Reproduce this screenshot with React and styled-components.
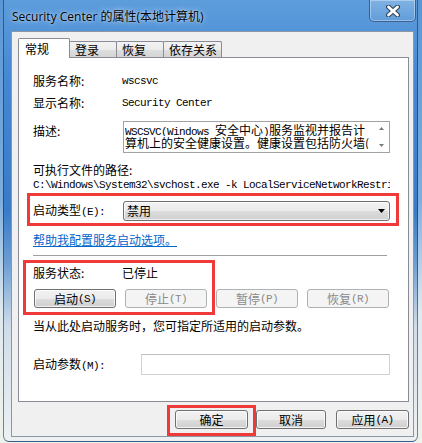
import React from "react";
import styled, { createGlobalStyle } from "styled-components";

const GlobalStyle = createGlobalStyle`
  html, body {
    margin: 0;
    padding: 0;
  }
  body {
    width: 422px;
    height: 443px;
    overflow: hidden;
    background: linear-gradient(to bottom, #5a96d4 0%, #7eaedd 45%, #dfe9ef 70%, #eef3ea 100%);
    font-family: "Noto Sans CJK SC", "Liberation Sans", sans-serif;
    font-size: 12px;
    color: #000;
  }
`;

const Stage = styled.div`
  position: relative;
  width: 422px;
  height: 443px;
`;

const Window = styled.div`
  margin-left: 3px;
  width: 415px;
  height: 442px;
  box-sizing: border-box;
  border: 1px solid rgba(20, 40, 70, 0.55);
  border-top: none;
  border-radius: 0 0 6px 6px;
  background: linear-gradient(
    to bottom,
    #5d9ddc 0%,
    #4587d2 18%,
    #3a7bc8 48%,
    #6f9fd4 60%,
    #cfdde9 74%,
    #edf1f4 100%
  );
  display: flex;
  flex-direction: column;
`;

const TitleBar = styled.div`
  height: 31px;
  flex: none;
  display: flex;
  align-items: center;
  padding-left: 8px;
`;

const Title = styled.div`
  font-family: "Open Sans", "Noto Sans CJK SC", sans-serif;
  font-size: 12px;
  color: #000;
  text-shadow: 0 0 6px rgba(255, 255, 255, 0.75), 0 0 2px rgba(255, 255, 255, 0.6);
  white-space: nowrap;
`;

const CloseButton = styled.div`
  margin-left: auto;
  margin-right: 1px;
  align-self: flex-start;
  width: 47px;
  height: 22px;
  box-sizing: border-box;
  border: 1px solid rgba(25, 45, 85, 0.6);
  border-top: none;
  border-radius: 0 0 5px 5px;
  background: linear-gradient(to bottom, rgba(255, 255, 255, 0.22), rgba(255, 255, 255, 0.06));
  box-shadow: inset 0 0 0 1px rgba(255, 255, 255, 0.35);
  display: flex;
  align-items: center;
  justify-content: center;
`;

const Client = styled.div`
  margin: 0 3px 4px 7px;
  height: 406px;
  box-sizing: border-box;
  border: 1px solid #8b97a5;
  background: #f0f0f0;
  padding: 6px 4px 7px 6px;
  display: flex;
  flex-direction: column;
`;

const TabStrip = styled.div`
  height: 19px;
  flex: none;
  display: flex;
  align-items: flex-end;
`;

const Tab = styled.div`
  position: relative;
  z-index: ${(p) => (p.$active ? 2 : 1)};
  box-sizing: border-box;
  width: ${(p) => p.$w}px;
  height: ${(p) => (p.$active ? 20 : 16)}px;
  margin-bottom: ${(p) => (p.$active ? -1 : 0)}px;
  margin-left: ${(p) => (p.$first ? 0 : -1)}px;
  border: 1px solid #898c95;
  border-bottom: none;
  border-radius: 2px 2px 0 0;
  background: ${(p) =>
    p.$active ? "#ffffff" : "linear-gradient(to bottom, #f3f3f3 0%, #ebebeb 50%, #dedede 51%, #d5d5d5 100%)"};
  padding-left: ${(p) => (p.$active ? 6 : 5)}px;
  display: flex;
  align-items: center;
  line-height: 14px;
  white-space: nowrap;
`;

const Panel = styled.div`
  position: relative;
  z-index: 1;
  height: 345px;
  flex: none;
  box-sizing: border-box;
  border: 1px solid #898c95;
  background: #ffffff;
  padding: 16px 18px 0 14px;
  display: flex;
  flex-direction: column;
`;

const Row = styled.div`
  display: flex;
  align-items: ${(p) => p.$align || "center"};
  height: ${(p) => p.$h || 14}px;
  margin-top: ${(p) => p.$mt || 0}px;
  line-height: 14px;
  white-space: nowrap;
  flex: none;
`;

const Label = styled.div`
  width: ${(p) => p.$w || 89}px;
  flex: none;
  margin-top: ${(p) => p.$mt || 0}px;
`;

/* latin text in the dialog is a 6px-wide monospace */
const Lat = styled.span`
  font-family: "Liberation Mono", monospace;
  font-size: 11px;
  letter-spacing: -0.6px;
`;

const PathText = styled.div`
  width: 357px;
  overflow: hidden;
  font-family: "Liberation Mono", monospace;
  font-size: 11px;
  letter-spacing: -0.6px;
`;

const TextArea = styled.div`
  width: 267px;
  height: 32px;
  box-sizing: border-box;
  border: 1px solid #a3a3a3;
  background: #fff;
  display: flex;
  overflow: hidden;
`;

const DescText = styled.div`
  flex: 1;
  min-width: 0;
  overflow: hidden;
  padding: 1px 0 0 1px;
  line-height: 13px;
  font-size: 12px;
`;

const DescLine = styled.div`
  height: 13px;
  white-space: nowrap;
  overflow: hidden;
`;

const ScrollBar = styled.div`
  width: 16px;
  flex: none;
  display: flex;
  flex-direction: column;
  justify-content: space-between;
  align-items: center;
  padding: 5px 0 5px;
  box-sizing: border-box;
`;

const Combo = styled.div`
  width: 267px;
  height: 20px;
  box-sizing: border-box;
  border: 1px solid #707070;
  border-radius: 3px;
  background: linear-gradient(to bottom, #f2f2f2 0%, #ebebeb 50%, #dddddd 51%, #cfcfcf 100%);
  box-shadow: inset 0 0 0 1px rgba(255, 255, 255, 0.7);
  display: flex;
  align-items: center;
  padding: 0 4px 0 3px;
`;

const ComboArrow = styled.div`
  margin-left: auto;
  display: flex;
`;

const HelpLink = styled.a`
  color: #0066cc;
  text-decoration: underline;
  cursor: pointer;
`;

const Separator = styled.div`
  height: 1px;
  flex: none;
  margin-top: ${(p) => p.$mt || 0}px;
  margin-right: 3px;
  background: #a0a0a0;
`;

const ButtonGrid = styled.div`
  display: grid;
  grid-template-columns: repeat(4, 1fr);
  column-gap: 9px;
  margin: ${(p) => p.$mt || 0}px 1px 0 1px;
  height: 19px;
  flex: none;
`;

const Button = styled.button`
  box-sizing: border-box;
  width: ${(p) => (p.$w ? `${p.$w}px` : "auto")};
  height: 19px;
  margin: 0 0 0 ${(p) => p.$ml || 0}px;
  padding: 0;
  border: 1px solid #707070;
  border-radius: 3px;
  background: linear-gradient(to bottom, #f2f2f2 0%, #ebebeb 50%, #dddddd 51%, #cfcfcf 100%);
  box-shadow: inset 0 0 0 1px rgba(255, 255, 255, 0.75);
  font-family: "Noto Sans CJK SC", sans-serif;
  font-size: 12px;
  line-height: 14px;
  color: #000;
  display: flex;
  align-items: center;
  justify-content: center;
  white-space: nowrap;

  &:disabled {
    border-color: #adb2b5;
    background: #f4f4f4;
    box-shadow: none;
    color: #8a8a8a;
  }
`;

const Input = styled.div`
  width: 249px;
  height: 21px;
  box-sizing: border-box;
  border: 1px solid #d2d2d2;
  border-top-color: #bdbdbd;
  background: #fff;
`;

const BottomBar = styled.div`
  margin-top: 8px;
  display: flex;
  justify-content: flex-end;
  flex: none;
`;

const Mark = styled.div`
  position: absolute;
  left: ${(p) => p.$x}px;
  top: ${(p) => p.$y}px;
  width: ${(p) => p.$w}px;
  height: ${(p) => p.$h}px;
  box-sizing: border-box;
  border: 3px solid #f03a3a;
  pointer-events: none;
  z-index: 10;
`;

const CloseIcon = () => (
  <svg width="14" height="12" viewBox="0 0 14 12">
    <path d="M2.5 2 L11.5 10 M11.5 2 L2.5 10" stroke="#34465c" strokeWidth="5" strokeLinecap="round" />
    <path d="M2.5 2 L11.5 10 M11.5 2 L2.5 10" stroke="#ffffff" strokeWidth="2.8" strokeLinecap="round" />
  </svg>
);

const Arrow = ({ up, color = "#000", w = 7, h = 4 }) => (
  <svg width={w} height={h} viewBox={`0 0 ${w} ${h}`}>
    <polygon points={up ? `0,${h} ${w},${h} ${w / 2},0` : `0,0 ${w},0 ${w / 2},${h}`} fill={color} />
  </svg>
);

const App = () => {
  return (
    <Stage>
      <GlobalStyle />
      <Window>
        <TitleBar>
          <Title>Security Center 的属性(本地计算机)</Title>
          <CloseButton>
            <CloseIcon />
          </CloseButton>
        </TitleBar>
        <Client>
          <TabStrip>
            <Tab $active $first $w={52}>常规</Tab>
            <Tab $w={48}>登录</Tab>
            <Tab $w={48}>恢复</Tab>
            <Tab $w={59}>依存关系</Tab>
          </TabStrip>
          <Panel>
            <Row>
              <Label>服务名称:</Label>
              <Lat>wscsvc</Lat>
            </Row>
            <Row $mt={8}>
              <Label>显示名称:</Label>
              <Lat>Security Center</Lat>
            </Row>
            <Row $mt={11} $h={32} $align="flex-start">
              <Label $w={90} $mt={3}>描述:</Label>
              <TextArea>
                <DescText>
                  <DescLine>
                    <Lat>WSCSVC(Windows </Lat>安全中心<Lat>)</Lat>服务监视并报告计
                  </DescLine>
                  <DescLine>算机上的安全健康设置。健康设置包括防火墙(</DescLine>
                </DescText>
                <ScrollBar>
                  <Arrow up color="#7a7a7a" w={5} h={3} />
                  <Arrow color="#7a7a7a" w={5} h={3} />
                </ScrollBar>
              </TextArea>
            </Row>
            <Row $mt={10}>可执行文件的路径:</Row>
            <Row $mt={1}>
              <PathText>C:\Windows\System32\svchost.exe -k LocalServiceNetworkRestricted</PathText>
            </Row>
            <Row $mt={9} $h={20}>
              <Label $w={90}>
                启动类型<Lat>(E):</Lat>
              </Label>
              <Combo>
                禁用
                <ComboArrow>
                  <Arrow />
                </ComboArrow>
              </Combo>
            </Row>
            <Row $mt={12}>
              <HelpLink>帮助我配置服务启动选项。</HelpLink>
            </Row>
            <Separator $mt={8} />
            <Row $mt={10}>
              <Label>服务状态:</Label>
              已停止
            </Row>
            <ButtonGrid $mt={9}>
              <Button>
                启动<Lat>(S)</Lat>
              </Button>
              <Button disabled>
                停止<Lat>(T)</Lat>
              </Button>
              <Button disabled>
                暂停<Lat>(P)</Lat>
              </Button>
              <Button disabled>
                恢复<Lat>(R)</Lat>
              </Button>
            </ButtonGrid>
            <Row $mt={11}>当从此处启动服务时，您可指定所适用的启动参数。</Row>
            <Row $mt={21} $h={21}>
              <Label $w={108}>
                启动参数<Lat>(M):</Lat>
              </Label>
              <Input />
            </Row>
          </Panel>
          <BottomBar>
            <Button $w={73}>确定</Button>
            <Button $w={70} $ml={8}>取消</Button>
            <Button $w={73} $ml={10}>
              应用<Lat>(A)</Lat>
            </Button>
          </BottomBar>
        </Client>
      </Window>
      <Mark $x={27} $y={193} $w={372} $h={33} />
      <Mark $x={23} $y={260} $w={192} $h={55} />
      <Mark $x={167} $y={405} $w={89} $h={31} />
    </Stage>
  );
};

export default App;
